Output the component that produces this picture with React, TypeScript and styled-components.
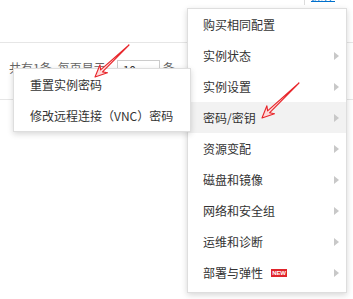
import React from 'react';
import styled, { createGlobalStyle } from 'styled-components';

const Global = createGlobalStyle`
  html, body { margin: 0; padding: 0; background: #fff; }
  body {
    font-family: "Noto Sans CJK SC", "Noto Sans", sans-serif;
    width: 353px; height: 299px; overflow: hidden;
  }
`;

const Page = styled.div`
  position: relative;
  width: 353px;
  height: 299px;
  overflow: hidden;
`;

const TopBar = styled.div`
  height: 43px;
  box-sizing: border-box;
  border-bottom: 1px solid #e6e6e6;
  display: flex;
  justify-content: flex-end;
  align-items: flex-start;
  gap: 6px;
  padding-right: 18px;
`;

const Divider = styled.span`
  width: 1px;
  height: 5px;
  background: #dcdcdc;
`;

const TopLink = styled.a`
  font-size: 12px;
  line-height: 14px;
  margin-top: -12px;
  color: #0070cc;
  text-decoration: underline;
`;

const PagerRow = styled.div`
  height: 57px;
  box-sizing: border-box;
  border-bottom: 1px solid #e6e6e6;
  display: flex;
  align-items: flex-start;
  padding: 17px 0 0 9px;
  font-size: 12px;
  line-height: 16px;
  color: #666;
`;

const PagerSelect = styled.div`
  width: 43px;
  height: 24px;
  box-sizing: border-box;
  border: 1px solid #ccc;
  margin: 0 3px 0 11px;
  padding: 1px 5px;
  color: #333;
`;

const Menu = styled.div<{ $left: number; $top: number; $width: number }>`
  position: absolute;
  left: ${(p) => p.$left}px;
  top: ${(p) => p.$top}px;
  width: ${(p) => p.$width}px;
  box-sizing: border-box;
  background: #fff;
  border: 1px solid #dedede;
  box-shadow: 0 2px 6px rgba(0, 0, 0, 0.16);
  display: flex;
  flex-direction: column;
`;

const MainMenu = styled(Menu)`
  padding: 0 0 4px;
`;

const SubMenu = styled(Menu)`
  padding: 0;
`;

const Item = styled.div<{ $active?: boolean; $pl: number }>`
  height: 31px;
  display: flex;
  align-items: center;
  padding: 0 7px 0 ${(p) => p.$pl}px;
  background: ${(p) => (p.$active ? '#f2f2f2' : 'transparent')};
  font-size: 12px;
  color: #333;
  white-space: nowrap;
`;

const Label = styled.span`
  flex: 1;
  display: flex;
  align-items: center;
`;

const Chevron = styled.span`
  width: 0;
  height: 0;
  border-left: 5px solid #c8c8c8;
  border-top: 4px solid transparent;
  border-bottom: 4px solid transparent;
`;

const NewBadge = styled.span`
  margin-left: 8px;
  width: 16px;
  height: 8px;
  background: #e0242b;
  color: #fff;
  font-family: "Liberation Sans", Arial, sans-serif;
  font-size: 6px;
  font-weight: bold;
  line-height: 8px;
  text-align: center;
  letter-spacing: -0.2px;
`;

const Overlay = styled.svg`
  position: absolute;
  left: 0;
  top: 0;
  pointer-events: none;
`;

function arrowPoints(x1: number, y1: number, x2: number, y2: number) {
  const dx = x2 - x1;
  const dy = y2 - y1;
  const L = Math.hypot(dx, dy);
  const ux = dx / L;
  const uy = dy / L;
  const nx = -uy;
  const ny = ux;
  const w = 1.4;
  const h = 12;
  const hw = 5.5;
  const j = 9;
  const bx = x2 - ux * j;
  const by = y2 - uy * j;
  const hx = x2 - ux * h;
  const hy = y2 - uy * h;
  const pts = [
    [x1, y1],
    [bx + nx * w, by + ny * w],
    [hx + nx * hw, hy + ny * hw],
    [x2, y2],
    [hx - nx * hw, hy - ny * hw],
    [bx - nx * w, by - ny * w],
  ];
  return pts.map((p) => `${p[0].toFixed(1)},${p[1].toFixed(1)}`).join(' ');
}

const Arrow: React.FC<{ x1: number; y1: number; x2: number; y2: number }> = ({ x1, y1, x2, y2 }) => (
  <polygon
    points={arrowPoints(x1, y1, x2, y2)}
    fill="#ffdada"
    stroke="#e8262b"
    strokeWidth={1.1}
    strokeLinejoin="round"
  />
);

const mainItems: { label: string; arrow: boolean; active?: boolean; badge?: boolean }[] = [
  { label: '购买相同配置', arrow: false },
  { label: '实例状态', arrow: true },
  { label: '实例设置', arrow: true },
  { label: '密码/密钥', arrow: true, active: true },
  { label: '资源变配', arrow: true },
  { label: '磁盘和镜像', arrow: true },
  { label: '网络和安全组', arrow: true },
  { label: '运维和诊断', arrow: true },
  { label: '部署与弹性', arrow: true, badge: true },
];

const subItems = ['重置实例密码', '修改远程连接（VNC）密码'];

export default function App() {
  return (
    <Page>
      <Global />
      <TopBar>
        <Divider />
        <TopLink>操作</TopLink>
      </TopBar>
      <PagerRow>
        <span>共有1条, 每页显示</span>
        <PagerSelect>10</PagerSelect>
        <span>条</span>
      </PagerRow>

      <MainMenu $left={187} $top={8} $width={160}>
        {mainItems.map((it) => (
          <Item key={it.label} $active={it.active} $pl={15}>
            <Label>
              {it.label}
              {it.badge && <NewBadge>NEW</NewBadge>}
            </Label>
            {it.arrow && <Chevron />}
          </Item>
        ))}
      </MainMenu>

      <SubMenu $left={13} $top={68} $width={178}>
        {subItems.map((s) => (
          <Item key={s} $pl={16}>
            <Label>{s}</Label>
          </Item>
        ))}
      </SubMenu>

      <Overlay width={353} height={299}>
        <Arrow x1={129} y1={45} x2={95} y2={77} />
        <Arrow x1={299} y1={83} x2={262} y2={118} />
      </Overlay>
    </Page>
  );
}
